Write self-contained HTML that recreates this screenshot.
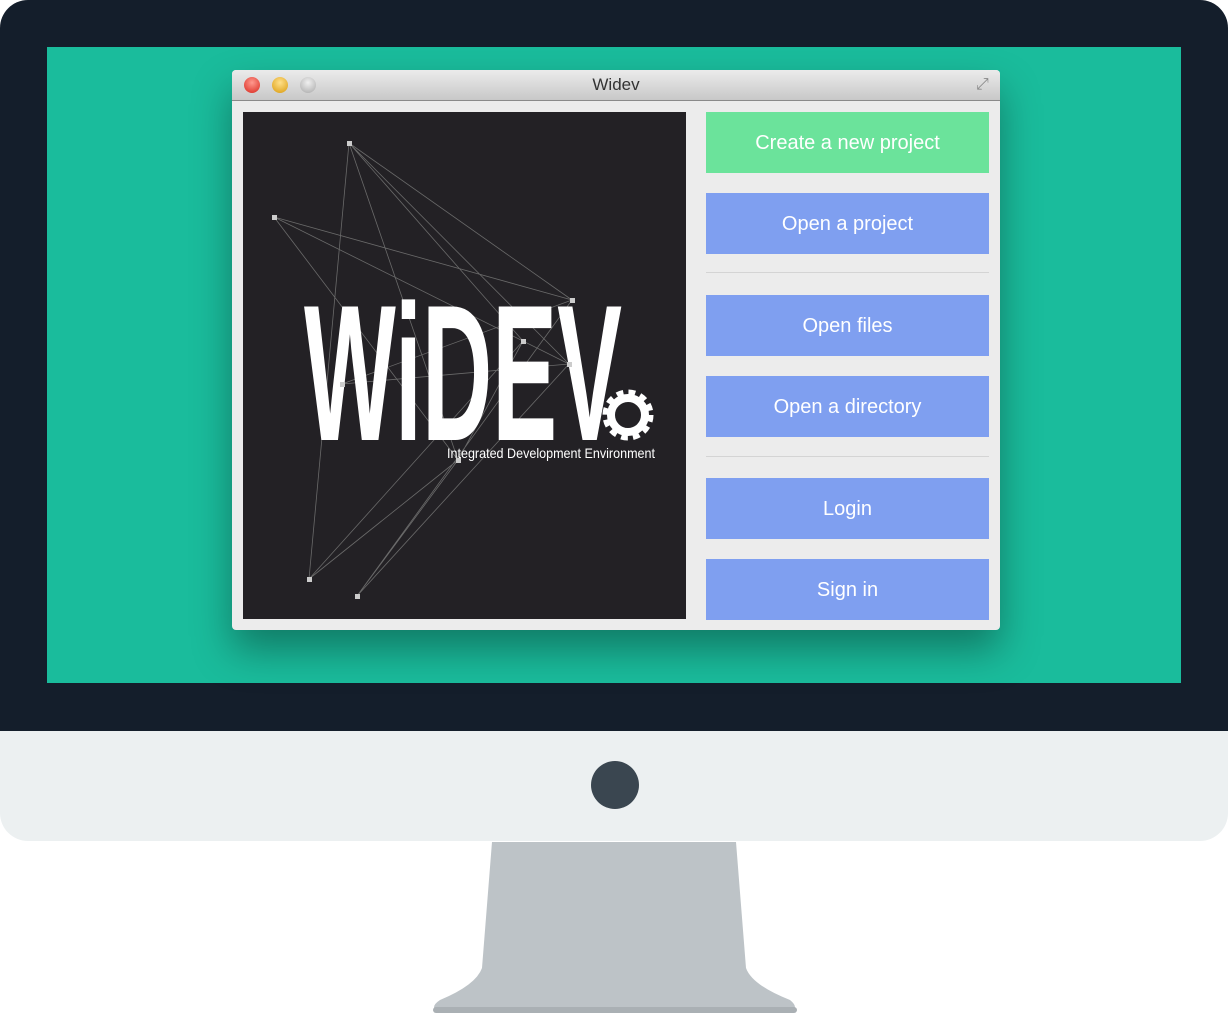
<!DOCTYPE html>
<html><head><meta charset="utf-8"><style>
body{margin:0;width:1228px;height:1015px;background:#fff;position:relative;overflow:hidden;font-family:"Liberation Sans",sans-serif}
.a{position:absolute}
.btn{position:absolute;left:706px;width:283px;height:61px;background:#7f9ff0;color:#fff;font-size:20px;text-align:center;line-height:63px}
</style></head><body>
<div class="a" style="left:0;top:0;width:1228px;height:731px;background:#141e2b;border-radius:28px 28px 0 0"></div>
<div class="a" style="left:47px;top:47px;width:1134px;height:636px;background:#1abc9c"></div>
<div class="a" style="left:0;top:731px;width:1228px;height:110px;background:#ecf0f1;border-radius:0 0 28px 28px"></div>
<div class="a" style="left:591px;top:761px;width:48px;height:48px;border-radius:50%;background:#3a4650"></div>
<svg class="a" style="left:0;top:0" width="1228" height="1015">
<path d="M492 842 L736 842 L746 968 Q752 985 790 1000 Q800 1008 790 1013 L440 1013 Q428 1008 440 1000 Q476 985 482 968 Z" fill="#bdc3c7"/>
<rect x="433" y="1007" width="364" height="6" rx="3" fill="#aab0b4"/>
</svg>
<div class="a" style="left:232px;top:70px;width:768px;height:560px;background:#ececec;border-radius:4px;box-shadow:0 20px 40px rgba(0,0,0,.35);overflow:hidden">
<div style="height:30px;background:linear-gradient(#ebebeb,#c8c8c8);border-bottom:1px solid #8a8a8a;text-align:center;line-height:30px;font-size:17px;color:#333">Widev</div>
<div class="a" style="left:12px;top:7px;width:16px;height:16px;border-radius:50%;background:radial-gradient(circle at 50% 35%,#ff9a8f,#d8261c)"></div>
<div class="a" style="left:40px;top:7px;width:16px;height:16px;border-radius:50%;background:radial-gradient(circle at 50% 35%,#ffe08a,#d99a0c)"></div>
<div class="a" style="left:68px;top:7px;width:16px;height:16px;border-radius:50%;background:radial-gradient(circle at 50% 35%,#f0f0f0,#a8a8a8)"></div>
<div class="a" style="left:744px;top:6px;color:#888;font-size:16px">⤢</div>
</div>
<svg class="a" style="left:243px;top:112px" width="443" height="507">
<rect width="443" height="507" fill="#232125"/>
<g stroke="#6a6a6a" stroke-width="0.8" fill="none" transform="translate(-243,-112)">
<path d="M349 143L572 300M349 143L523 341M349 143L569 364M349 143L458 460M274 217L572 300M274 217L569 364M274 217L458 460M572 300L342 384M523 341L309 579M569 364L357 596M458 460L309 579M458 460L357 596M342 384L569 364M523 341L458 460M349 143L309 579M572 300L357 596"/>
</g>
<text x="61" y="328" font-family="Liberation Sans" font-weight="bold" font-size="194" fill="#fff" textLength="318" lengthAdjust="spacingAndGlyphs">WiDEV</text>
<text x="204" y="346" font-family="Liberation Sans" font-size="14" fill="#fff" textLength="208" lengthAdjust="spacingAndGlyphs">Integrated Development Environment</text>
<circle cx="385" cy="303" r="20" fill="none" stroke="#fff" stroke-width="11" stroke-dasharray="6 4.5"/>
<circle cx="385" cy="303" r="17" fill="none" stroke="#fff" stroke-width="8"/>
<g fill="#ccc"><rect x="104" y="29" width="5" height="5"/><rect x="29" y="103" width="5" height="5"/><rect x="327" y="186" width="5" height="5"/><rect x="278" y="227" width="5" height="5"/><rect x="324" y="250" width="5" height="5"/><rect x="97" y="270" width="5" height="5"/><rect x="213" y="346" width="5" height="5"/><rect x="64" y="465" width="5" height="5"/><rect x="112" y="482" width="5" height="5"/></g>
</svg>
<div class="btn" style="top:112px;background:#6be39b">Create a new project</div>
<div class="btn" style="top:193px">Open a project</div>
<div class="a" style="left:706px;top:272px;width:283px;height:1px;background:#d4d4d4"></div>
<div class="btn" style="top:295px">Open files</div>
<div class="btn" style="top:376px">Open a directory</div>
<div class="a" style="left:706px;top:456px;width:283px;height:1px;background:#d4d4d4"></div>
<div class="btn" style="top:478px">Login</div>
<div class="btn" style="top:559px">Sign in</div>
</body></html>
